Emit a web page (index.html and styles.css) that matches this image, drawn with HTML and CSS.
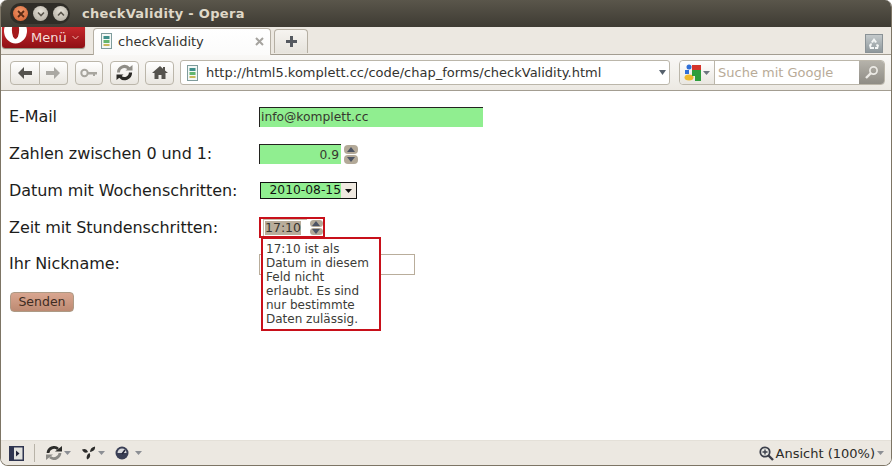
FILE: index.html
```html
<!DOCTYPE html>
<html lang="de">
<head>
<meta charset="utf-8">
<title>checkValidity - Opera</title>
<link rel="stylesheet" href="styles.css">
</head>
<body>
<div class="window">
  <header class="titlebar">
    <div class="winbtns">
      <span class="wb close"><svg width="10" height="10" viewBox="0 0 10 10"><path d="M2 2l6 6M8 2l-6 6" stroke="#5b2a14" stroke-width="1.8"/></svg></span>
      <span class="wb"><svg width="10" height="10" viewBox="0 0 10 10"><path d="M2 3.500l3 3 3-3" fill="none" stroke="#5a564c" stroke-width="1.6"/></svg></span>
      <span class="wb"><svg width="10" height="10" viewBox="0 0 10 10"><path d="M2 6.500l3-3 3 3" fill="none" stroke="#5a564c" stroke-width="1.6"/></svg></span>
    </div>
    <span class="wintitle">checkValidity - Opera</span>
  </header>

  <div class="tabbar">
    <div class="menu">
      <svg class="o-logo" width="26" height="20" viewBox="0 0 26 20"><ellipse cx="12.500" cy="4" rx="11.500" ry="12.500" fill="#fff"/><ellipse cx="12.500" cy="3" rx="3.600" ry="9" fill="#a51a1c"/></svg>
      <span class="menu-label">Menü</span>
      <svg width="7" height="5" viewBox="0 0 7 5"><path d="M.5 1l3 3 3-3" fill="none" stroke="#eeb0a8"/></svg>
    </div>
    <div class="tab">
      <svg class="favicon" width="11" height="16" viewBox="0 0 11 16"><rect x=".5" y=".5" width="10" height="15" fill="#f4f8f6" stroke="#7f9c9c"/><rect x="2.500" y="3" width="6" height="3" fill="#3f8f8a"/><rect x="2.500" y="7" width="6" height="3" fill="#62b56e"/><rect x="2.500" y="11" width="6" height="2" fill="#c8b85c"/></svg>
      <span class="tab-title">checkValidity</span>
      <svg class="tab-x" width="9" height="9" viewBox="0 0 9 9"><path d="M1 1l7 7M8 1l-7 7" stroke="#a5a39e" stroke-width="2"/></svg>
    </div>
    <div class="newtab"><svg width="13" height="13" viewBox="0 0 13 13"><path d="M5 1h3v4h4v3H8v4H5V8H1V5h4z" fill="#55595f"/></svg></div>
    <div class="trash"><svg width="14" height="14" viewBox="0 0 14 14"><path d="M7 1l3 4-2 1-1-2-1 2-2-1zM2 8l2-2 1 1-1 3h3v2H3zM12 8l-2-1-1 1 1 2H8v2h3z" fill="#f4f6f6"/></svg></div>
  </div>

  <nav class="toolbar">
    <div class="btn-group">
      <span class="tb seg"><svg width="16" height="14" viewBox="0 0 16 14"><path d="M1 7l6-6v4h8v4H7v4z" fill="#55534e"/></svg></span>
      <span class="tb seg"><svg width="16" height="14" viewBox="0 0 16 14"><path d="M15 7L9 1v4H1v4h8v4z" fill="#aaa8a3"/></svg></span>
    </div>
    <span class="tb key"><svg width="18" height="10" viewBox="0 0 18 10"><circle cx="4.500" cy="5" r="3.200" fill="none" stroke="#a8a69f" stroke-width="2"/><path d="M8 4h9v2.500h-2V8h-2V6.500H8z" fill="#a8a69f"/></svg></span>
    <span class="tb reload"><svg width="17" height="17" viewBox="0 0 17 17"><path d="M2.500 8.500a6 6 0 0 1 10.500-4" fill="none" stroke="#8f8d87" stroke-width="3"/><path d="M14.500 8.500a6 6 0 0 1-10.500 4" fill="none" stroke="#2a2926" stroke-width="3.200"/><path d="M9.500 6.500h7V1z" fill="#8f8d87"/><path d="M7.500 10.500h-7V16z" fill="#2a2926"/></svg></span>
    <span class="tb home"><svg width="16" height="15" viewBox="0 0 16 15"><path d="M8 1L0 8h2.500v6H6.500v-4h3v4h4V8H16l-3-2.600V2h-2v1.700z" fill="#55534e"/></svg></span>
    <div class="address">
      <svg class="favicon" width="11" height="16" viewBox="0 0 11 16"><rect x=".5" y=".5" width="10" height="15" fill="#f4f8f6" stroke="#7f9c9c"/><rect x="2.500" y="3" width="6" height="3" fill="#3f8f8a"/><rect x="2.500" y="7" width="6" height="3" fill="#62b56e"/><rect x="2.500" y="11" width="6" height="2" fill="#c8b85c"/></svg>
      <span class="url">http://html5.komplett.cc/code/chap_forms/checkValidity.html</span>
      <svg width="7" height="5" viewBox="0 0 7 5"><path d="M0 0h7L3.500 5z" fill="#55606c"/></svg>
    </div>
    <div class="search">
      <span class="engine">
        <svg width="17" height="17" viewBox="0 0 17 17"><circle cx="5" cy="3" r="2.500" fill="#2f6fd8"/><rect x="1" y="6" width="4" height="4" fill="#2f6fd8"/><ellipse cx="5" cy="13.500" rx="4.500" ry="3" fill="#eeb92e"/><path d="M8 1h9v5H8z" fill="#d5342a"/><path d="M8 6h9v11h-6v-5H8z" fill="#2e9e3c"/></svg>
        <svg width="7" height="4" viewBox="0 0 7 4"><path d="M0 0h7L3.500 4z" fill="#6d7680"/></svg>
      </span>
      <span class="search-text">Suche mit Google</span>
      <span class="search-go"><svg width="15" height="15" viewBox="0 0 15 15"><circle cx="9.500" cy="5.500" r="3.600" fill="none" stroke="#eceae5" stroke-width="1.700"/><path d="M7 8l-5 5" stroke="#eceae5" stroke-width="2.400"/></svg></span>
    </div>
  </nav>

  <main class="content">
    <form class="form">
      <div class="row"><label>E-Mail</label><span class="field email">info@komplett.cc</span></div>
      <div class="row"><label>Zahlen zwischen 0 und 1:</label>
        <span class="field number">0.9</span>
        <span class="spin num-spin"><i class="up"></i><i class="down"></i></span>
      </div>
      <div class="row"><label>Datum mit Wochenschritten:</label>
        <span class="date"><span class="date-val">2010-08-15</span><span class="date-btn"><svg width="7" height="4" viewBox="0 0 7 4"><path d="M0 0h7L3.500 4z" fill="#111"/></svg></span></span>
      </div>
      <div class="row"><label>Zeit mit Stundenschritten:</label>
        <span class="time-wrap">
          <span class="time-val"><span class="sel">17:10</span></span>
          <span class="spin time-spin"><i class="up"></i><i class="down"></i></span>
          <span class="tooltip">17:10 ist als Datum in diesem Feld nicht erlaubt. Es sind nur bestimmte Daten zulässig.</span>
        </span>
      </div>
      <div class="row"><label>Ihr Nickname:</label><span class="field nick"></span></div>
      <button type="button" class="send">Senden</button>
    </form>
  </main>

  <footer class="statusbar">
    <span class="panel"><svg width="15" height="15" viewBox="0 0 15 15"><rect width="15" height="15" fill="#2f3550"/><rect x="5" y="1.500" width="8.500" height="12" fill="#e2e2de"/><path d="M7 4.500l3.500 3-3.500 3z" fill="#22243a"/></svg></span>
    <span class="sep"></span>
    <span class="st-icon first"><svg width="16" height="14" viewBox="0 0 16 14"><path d="M2 7a6 6 0 0 1 10-4" fill="none" stroke="#2c2c2a" stroke-width="2.800"/><path d="M14 7a6 6 0 0 1-10 4" fill="none" stroke="#8b8a86" stroke-width="2.800"/><path d="M9 5.500h7V0z" fill="#2c2c2a"/><path d="M7 8.500H0V14z" fill="#8b8a86"/></svg><svg width="7" height="4" viewBox="0 0 7 4"><path d="M0 0h7L3.500 4z" fill="#8c8f94"/></svg></span>
    <span class="st-icon second"><svg width="14" height="14" viewBox="0 0 14 14"><path d="M0 3.500c3-1.500 5 0 6 2.500-2.500 1.500-5 .5-6-2.500zM13 .5c.5 3-1.500 5-5 5.500 0-3 2-5 5-5.500zM5 13.500C4 11 5 8 7.500 7c1.500 2.500.5 5.500-2.500 6.500z" fill="#2c2c2a"/></svg><svg width="7" height="4" viewBox="0 0 7 4"><path d="M0 0h7L3.500 4z" fill="#8c8f94"/></svg></span>
    <span class="st-icon third"><svg width="14" height="14" viewBox="0 0 14 14"><circle cx="7" cy="7" r="6.500" fill="#3a3f55"/><path d="M2.500 7a4.500 4.500 0 0 1 9 0z" fill="#d8d9dc"/><path d="M7 8l3-4" stroke="#22243a" stroke-width="1.500"/></svg><svg width="7" height="4" viewBox="0 0 7 4"><path d="M0 0h7L3.500 4z" fill="#8c8f94"/></svg></span>
    <span class="zoom">
      <svg width="15" height="15" viewBox="0 0 15 15"><circle cx="6" cy="6" r="4.700" fill="#e9e9e4" stroke="#3c3f4a" stroke-width="1.800"/><path d="M9.500 9.500l4.500 4.500" stroke="#3c3f4a" stroke-width="2.400"/><path d="M3.500 6h5M6 3.500v5" stroke="#3c3f4a" stroke-width="1.400"/></svg>
      <span class="zoom-text">Ansicht (100%)</span>
      <svg width="7" height="4" viewBox="0 0 7 4"><path d="M0 0h7L3.500 4z" fill="#8c8f94"/></svg>
    </span>
  </footer>
</div>
</body>
</html>
```

FILE: styles.css
```css
* { box-sizing: border-box; }
html, body { margin: 0; height: 100%; background: #fff; }
body { font-family: "DejaVu Sans", sans-serif; overflow: hidden; }
svg { display: block; flex: none; }

.window {
  width: 892px;
  height: 466px;
  display: flex;
  flex-direction: column;
  border-left: 1px solid #7d7565;
  border-right: 1px solid #7d7565;
  border-bottom: 1px solid #7d7565;
  border-radius: 7px 7px 8px 8px;
  overflow: hidden;
  background: #fff;
}

.titlebar {
  height: 27px;
  flex: none;
  display: flex;
  align-items: center;
  padding-left: 9px;
  background: linear-gradient(#5a564b, #3e3b33);
}
.winbtns {
  width: 60px;
  height: 21px;
  display: flex;
  align-items: center;
  justify-content: space-between;
  padding: 0 2px 0 3px;
  border-radius: 11px;
  background: #2f2d27;
}
.wb {
  width: 15px;
  height: 15px;
  border-radius: 50%;
  display: flex;
  align-items: center;
  justify-content: center;
  background: radial-gradient(circle at 50% 35%, #e6e2d8, #a9a498);
}
.wb.close { background: radial-gradient(circle at 50% 35%, #f09a6c, #d2592a); }
.wintitle {
  margin-left: 12px;
  color: #dfd8c8;
  font-size: 13px;
  font-weight: bold;
  letter-spacing: .3px;
}

.tabbar {
  height: 28px;
  flex: none;
  display: flex;
  align-items: flex-end;
  background: #ece8e1;
  border-bottom: 1px solid #a39d91;
  position: relative;
}
.menu {
  align-self: flex-start;
  width: 83px;
  height: 21px;
  margin-left: 1px;
  display: flex;
  align-items: center;
  padding-left: 29px;
  gap: 5px;
  position: relative;
  overflow: hidden;
  background: linear-gradient(#c6272b, #8f1015);
  border-radius: 0 0 3px 3px;
  box-shadow: 0 1px 1px #8b8575;
}
.o-logo { position: absolute; left: 1px; top: 0; }
.menu-label { color: #f6dcd8; font-size: 13px; }
.tab {
  width: 178px;
  height: 27px;
  margin: 0 0 -1px 8px;
  display: flex;
  align-items: center;
  padding: 0 6px 2px 7px;
  background: linear-gradient(#fff, #fbfbfa);
  border: 1px solid #b5afa3;
  border-bottom: 0;
  border-radius: 4px 4px 0 0;
  position: relative;
}
.tab-title { margin-left: 6px; font-size: 13px; color: #33332f; flex: 1; }
.newtab {
  width: 34px;
  height: 24px;
  margin: 0 0 1px 3px;
  display: flex;
  align-items: center;
  justify-content: center;
  background: linear-gradient(#f6f4f0, #e6e3dc);
  border: 1px solid #b5afa3;
  border-bottom: 0;
  border-radius: 4px 4px 0 0;
}
.trash {
  width: 18px;
  height: 19px;
  margin: 0 8px 1px auto;
  display: flex;
  align-items: center;
  justify-content: center;
  background: linear-gradient(#c3c9cb, #8f989c);
  border: 1px solid #8a9296;
}

.toolbar {
  height: 36px;
  flex: none;
  display: flex;
  align-items: center;
  padding: 0 6px 0 9px;
  background: linear-gradient(#f9f8f6, #ece9e3);
  border-bottom: 1px solid #a39d91;
}
.btn-group { display: flex; width: 58px; height: 24px; }
.tb {
  height: 24px;
  display: flex;
  align-items: center;
  justify-content: center;
  background: linear-gradient(#fff, #e9e6e0);
  border: 1px solid #bbb6aa;
  border-radius: 4px;
}
.tb.seg { flex: 1; border-radius: 4px 0 0 4px; }
.tb.seg + .tb.seg { border-left: 0; border-radius: 0 4px 4px 0; }
.key { width: 28px; margin-left: 7px; }
.reload { width: 29px; margin-left: 7px; }
.home { width: 29px; margin-left: 6px; }
.address {
  width: 490px;
  height: 25px;
  margin-left: 6px;
  display: flex;
  align-items: center;
  padding: 0 3px 0 6px;
  background: #fff;
  border: 1px solid #bbb6aa;
  border-radius: 3px;
}
.url { flex: 1; margin-left: 8px; font-size: 13px; color: #33332f; white-space: nowrap; }
.search {
  width: 206px;
  height: 25px;
  margin-left: 9px;
  display: flex;
  align-items: stretch;
  background: #fff;
  border: 1px solid #bbb6aa;
  border-radius: 4px;
}
.engine {
  width: 35px;
  display: flex;
  align-items: center;
  justify-content: center;
  gap: 2px;
  background: linear-gradient(#fff, #e9e6e0);
  border-right: 1px solid #bbb6aa;
  border-radius: 4px 0 0 4px;
}
.search-text { flex: 1; align-self: center; padding-left: 3px; font-size: 13px; color: #b8ab98; white-space: nowrap; }
.search-go {
  width: 25px;
  display: flex;
  align-items: center;
  justify-content: center;
  background: linear-gradient(#b5b2aa, #8f8c85);
  border-radius: 0 3px 3px 0;
}

.content { flex: 1; min-height: 0; padding: 8px 8px 0; }
.form { display: flex; flex-direction: column; align-items: flex-start; }
.row {
  height: 36.75px;
  width: 100%;
  display: flex;
  align-items: center;
  color: #1d1d1b;
}
.row label { width: 250px; flex: none; font-size: 16px; letter-spacing: -.08px; padding-bottom: 1px; }
.field {
  height: 20px;
  display: flex;
  align-items: center;
  font-size: 12.3px;
  color: #37382f;
  background: #90ee90;
  border-top: 1px solid #23231f;
  border-left: 1px solid #23231f;
  padding: 0 2px 0 1px;
}
.email { width: 224px; height: 20px; margin-top: -1px; }
.number { width: 82px; justify-content: flex-end; }
.nick { width: 156px; height: 21px; background: #fff; border: 1px solid #b9ad9b; }
.spin { display: flex; flex-direction: column; gap: 1px; width: 14px; }
.spin i {
  display: block;
  height: 9px;
  border-radius: 4px;
  background: #b3a998;
  position: relative;
}
.spin i::after {
  content: "";
  position: absolute;
  left: 3px;
  border-left: 4px solid transparent;
  border-right: 4px solid transparent;
}
.spin .up::after { top: 2px; border-bottom: 5px solid #4c5464; }
.spin .down::after { top: 2px; border-top: 5px solid #4c5464; }
.num-spin { margin-left: 3px; }

.date {
  width: 97px;
  height: 17px;
  margin-left: 1px;
  display: flex;
  border: 1px solid #111;
  font-size: 12.3px;
  color: #111;
  background: #90ee90;
}
.date-val { flex: 1; text-align: right; line-height: 15px; }
.date-btn {
  width: 15px;
  display: flex;
  align-items: center;
  justify-content: center;
  background: #efe9e0;
}

.time-wrap {
  width: 66px;
  height: 21px;
  display: flex;
  align-items: center;
  gap: 2px;
  padding-left: 2px;
  border: 2px solid #c8101a;
  position: relative;
}
.time-val {
  width: 45px;
  height: 17px;
  display: flex;
  align-items: center;
  padding-left: 1px;
  background: #fff;
  border-top: 1px solid #c7bba9;
  border-left: 1px solid #c7bba9;
  font-size: 12.5px;
}
.sel { background: #b9ad9b; color: #37352f; line-height: 14px; }
.time-spin { width: 13px; margin-left: 1px; }
.time-spin i { height: 7px; }
.time-spin i::after { left: 2px; top: 1px !important; }
.tooltip {
  position: absolute;
  left: 0;
  top: 18px;
  z-index: 2;
  width: 120px;
  height: 94px;
  padding: 3px 7px 3px 3px;
  background: #fff;
  border: 2px solid #c8101a;
  font-size: 12px;
  line-height: 14px;
  color: #3c3c38;
}
.send {
  width: 64px;
  height: 20px;
  margin: 9px 0 0 1px;
  padding: 0;
  font: 12.5px "DejaVu Sans", sans-serif;
  color: #3e2c22;
  background: linear-gradient(#d9a690, #bd8a72);
  border: 1px solid #ad9a85;
  border-radius: 4px;
}

.statusbar {
  height: 25px;
  flex: none;
  display: flex;
  align-items: center;
  padding: 0 7px 0 8px;
  background: #ece8e1;
  border-top: 1px solid #e4e0d8;
}
.sep { width: 1px; height: 18px; margin-left: 10px; background: #b8b3a8; }
.st-icon { display: flex; align-items: center; gap: 2px; }
.first { margin-left: 11px; }
.second { margin-left: 11px; }
.third { margin-left: 10px; gap: 6px; }
.zoom { margin-left: auto; display: flex; align-items: center; gap: 2px; }
.zoom-text { font-size: 13px; color: #2b2b28; }
```
